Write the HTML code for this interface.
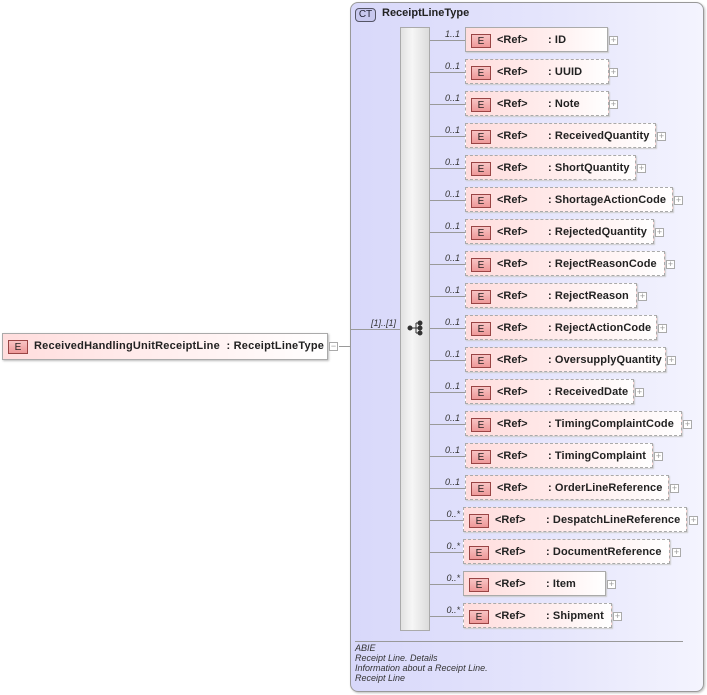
<!DOCTYPE html>
<html><head><style>
body{margin:0;width:707px;height:695px;background:#fff;position:relative;overflow:hidden;font-family:"Liberation Sans",sans-serif}
div,span{position:absolute;box-sizing:border-box}
.ct{left:350px;top:2px;width:354px;height:690px;border:1px solid #999;border-radius:8px;background:linear-gradient(90deg,#d8d8fa,#e6e6fc 60%,#f4f4fe);box-shadow:1px 1px 2px #bbb}
.ctb{left:355px;top:8px;width:21px;height:14px;border:1px solid #556;border-radius:4px;background:#c8c8ee;font-size:10px;text-align:center;line-height:12px;color:#223}
.seq{left:400px;top:27px;width:30px;height:604px;background:linear-gradient(90deg,#e2e2e2,#f6f6f6 40%,#dcdcdc);border:1px solid #aaa}
.b{left:465px;height:25px;border:1px dashed #aaa;background:linear-gradient(90deg,#fdd,#fee 60%,#fff);box-shadow:1px 1px 1px #ccc;font-size:11px;font-weight:bold;color:#222}
.b.s{border-style:solid}
.e{left:5px;top:6px;width:20px;height:14px;border:1px solid #944;background:linear-gradient(#f8c4c4,#ee9898);font-size:10px;font-weight:normal;text-align:center;line-height:13px;color:#222}
.r{left:31px;top:6px}
.n{left:82px;top:6px;white-space:nowrap;letter-spacing:.1px}
.p{width:9px;height:9px;border:1px solid #aaa;background:#fff;font-size:9px;line-height:6px;text-align:center;color:#999}
.l{height:1px;background:#999}
.m{font-size:9px;font-style:italic;color:#333;text-align:right;width:30px}
.d{left:355px;font-size:9px;font-style:italic;color:#333}
</style></head><body>
<div class="ct"></div>
<div class="ctb">CT</div>
<div style="left:382px;top:7px;font-size:11px;font-weight:bold;color:#222">ReceiptLineType</div>
<div class="seq"></div>
<svg style="position:absolute;left:407px;top:320px" width="18" height="16"><g fill="#333" stroke="#333"><circle cx="3" cy="8" r="2"/><line x1="3" y1="8" x2="9" y2="8"/><line x1="9" y1="3" x2="9" y2="13"/><line x1="9" y1="3" x2="13" y2="3"/><line x1="9" y1="8" x2="13" y2="8"/><line x1="9" y1="13" x2="13" y2="13"/><circle cx="13" cy="3" r="2"/><circle cx="13" cy="8" r="2"/><circle cx="13" cy="13" r="2"/></g></svg>

<div style="left:2px;top:333px;width:326px;height:27px;border:1px solid #aaa;background:linear-gradient(90deg,#fdd,#fee 50%,#fff);box-shadow:1px 1px 2px #bbb;font-size:11px;font-weight:bold;color:#222"><span class="e" style="left:5px;top:6px">E</span><span style="left:31px;top:6px;white-space:nowrap;letter-spacing:.22px">ReceivedHandlingUnitReceiptLine &nbsp;: ReceiptLineType</span></div>
<div class="p" style="left:329px;top:342px;line-height:7px">−</div>
<div class="l" style="left:339px;top:346px;width:11px"></div>
<div class="l" style="left:350px;top:329px;width:50px"></div>
<div class="m" style="left:366px;top:318px">[1]..[1]</div>

<div class="l" style="left:355px;top:641px;width:328px"></div>
<div class="d" style="top:643px">ABIE</div>
<div class="d" style="top:653px">Receipt Line. Details</div>
<div class="d" style="top:663px">Information about a Receipt Line.</div>
<div class="d" style="top:673px">Receipt Line</div>

<div class="l" style="left:430px;top:40px;width:35px"></div><div class="m" style="left:430px;top:29px">1..1</div>
<div class="b s" style="top:27px;width:143px"><span class="e">E</span><span class="r">&lt;Ref&gt;</span><span class="n">: ID</span></div><div class="p" style="left:609px;top:36px">+</div>

<div class="l" style="left:430px;top:72px;width:35px"></div><div class="m" style="left:430px;top:61px">0..1</div>
<div class="b" style="top:59px;width:144px"><span class="e">E</span><span class="r">&lt;Ref&gt;</span><span class="n">: UUID</span></div><div class="p" style="left:609px;top:68px">+</div>

<div class="l" style="left:430px;top:104px;width:35px"></div><div class="m" style="left:430px;top:93px">0..1</div>
<div class="b" style="top:91px;width:144px"><span class="e">E</span><span class="r">&lt;Ref&gt;</span><span class="n">: Note</span></div><div class="p" style="left:609px;top:100px">+</div>

<div class="l" style="left:430px;top:136px;width:35px"></div><div class="m" style="left:430px;top:125px">0..1</div>
<div class="b" style="top:123px;width:191px"><span class="e">E</span><span class="r">&lt;Ref&gt;</span><span class="n">: ReceivedQuantity</span></div><div class="p" style="left:657px;top:132px">+</div>

<div class="l" style="left:430px;top:168px;width:35px"></div><div class="m" style="left:430px;top:157px">0..1</div>
<div class="b" style="top:155px;width:171px"><span class="e">E</span><span class="r">&lt;Ref&gt;</span><span class="n">: ShortQuantity</span></div><div class="p" style="left:637px;top:164px">+</div>

<div class="l" style="left:430px;top:200px;width:35px"></div><div class="m" style="left:430px;top:189px">0..1</div>
<div class="b" style="top:187px;width:208px"><span class="e">E</span><span class="r">&lt;Ref&gt;</span><span class="n">: ShortageActionCode</span></div><div class="p" style="left:674px;top:196px">+</div>

<div class="l" style="left:430px;top:232px;width:35px"></div><div class="m" style="left:430px;top:221px">0..1</div>
<div class="b" style="top:219px;width:189px"><span class="e">E</span><span class="r">&lt;Ref&gt;</span><span class="n">: RejectedQuantity</span></div><div class="p" style="left:655px;top:228px">+</div>

<div class="l" style="left:430px;top:264px;width:35px"></div><div class="m" style="left:430px;top:253px">0..1</div>
<div class="b" style="top:251px;width:200px"><span class="e">E</span><span class="r">&lt;Ref&gt;</span><span class="n">: RejectReasonCode</span></div><div class="p" style="left:666px;top:260px">+</div>

<div class="l" style="left:430px;top:296px;width:35px"></div><div class="m" style="left:430px;top:285px">0..1</div>
<div class="b" style="top:283px;width:172px"><span class="e">E</span><span class="r">&lt;Ref&gt;</span><span class="n">: RejectReason</span></div><div class="p" style="left:638px;top:292px">+</div>

<div class="l" style="left:430px;top:328px;width:35px"></div><div class="m" style="left:430px;top:317px">0..1</div>
<div class="b" style="top:315px;width:192px"><span class="e">E</span><span class="r">&lt;Ref&gt;</span><span class="n">: RejectActionCode</span></div><div class="p" style="left:658px;top:324px">+</div>

<div class="l" style="left:430px;top:360px;width:35px"></div><div class="m" style="left:430px;top:349px">0..1</div>
<div class="b" style="top:347px;width:201px"><span class="e">E</span><span class="r">&lt;Ref&gt;</span><span class="n">: OversupplyQuantity</span></div><div class="p" style="left:667px;top:356px">+</div>

<div class="l" style="left:430px;top:392px;width:35px"></div><div class="m" style="left:430px;top:381px">0..1</div>
<div class="b" style="top:379px;width:169px"><span class="e">E</span><span class="r">&lt;Ref&gt;</span><span class="n">: ReceivedDate</span></div><div class="p" style="left:635px;top:388px">+</div>

<div class="l" style="left:430px;top:424px;width:35px"></div><div class="m" style="left:430px;top:413px">0..1</div>
<div class="b" style="top:411px;width:217px"><span class="e">E</span><span class="r">&lt;Ref&gt;</span><span class="n">: TimingComplaintCode</span></div><div class="p" style="left:683px;top:420px">+</div>

<div class="l" style="left:430px;top:456px;width:35px"></div><div class="m" style="left:430px;top:445px">0..1</div>
<div class="b" style="top:443px;width:188px"><span class="e">E</span><span class="r">&lt;Ref&gt;</span><span class="n">: TimingComplaint</span></div><div class="p" style="left:654px;top:452px">+</div>

<div class="l" style="left:430px;top:488px;width:35px"></div><div class="m" style="left:430px;top:477px">0..1</div>
<div class="b" style="top:475px;width:204px"><span class="e">E</span><span class="r">&lt;Ref&gt;</span><span class="n">: OrderLineReference</span></div><div class="p" style="left:670px;top:484px">+</div>

<div class="l" style="left:430px;top:520px;width:33px"></div><div class="m" style="left:430px;top:509px">0..*</div>
<div class="b" style="left:463px;top:507px;width:224px"><span class="e">E</span><span class="r">&lt;Ref&gt;</span><span class="n" style="left:82px">: DespatchLineReference</span></div><div class="p" style="left:689px;top:516px">+</div>

<div class="l" style="left:430px;top:552px;width:33px"></div><div class="m" style="left:430px;top:541px">0..*</div>
<div class="b" style="left:463px;top:539px;width:207px"><span class="e">E</span><span class="r">&lt;Ref&gt;</span><span class="n">: DocumentReference</span></div><div class="p" style="left:672px;top:548px">+</div>

<div class="l" style="left:430px;top:584px;width:33px"></div><div class="m" style="left:430px;top:573px">0..*</div>
<div class="b s" style="left:463px;top:571px;width:143px"><span class="e">E</span><span class="r">&lt;Ref&gt;</span><span class="n">: Item</span></div><div class="p" style="left:607px;top:580px">+</div>

<div class="l" style="left:430px;top:616px;width:33px"></div><div class="m" style="left:430px;top:605px">0..*</div>
<div class="b" style="left:463px;top:603px;width:149px"><span class="e">E</span><span class="r">&lt;Ref&gt;</span><span class="n">: Shipment</span></div><div class="p" style="left:613px;top:612px">+</div>
</body></html>
